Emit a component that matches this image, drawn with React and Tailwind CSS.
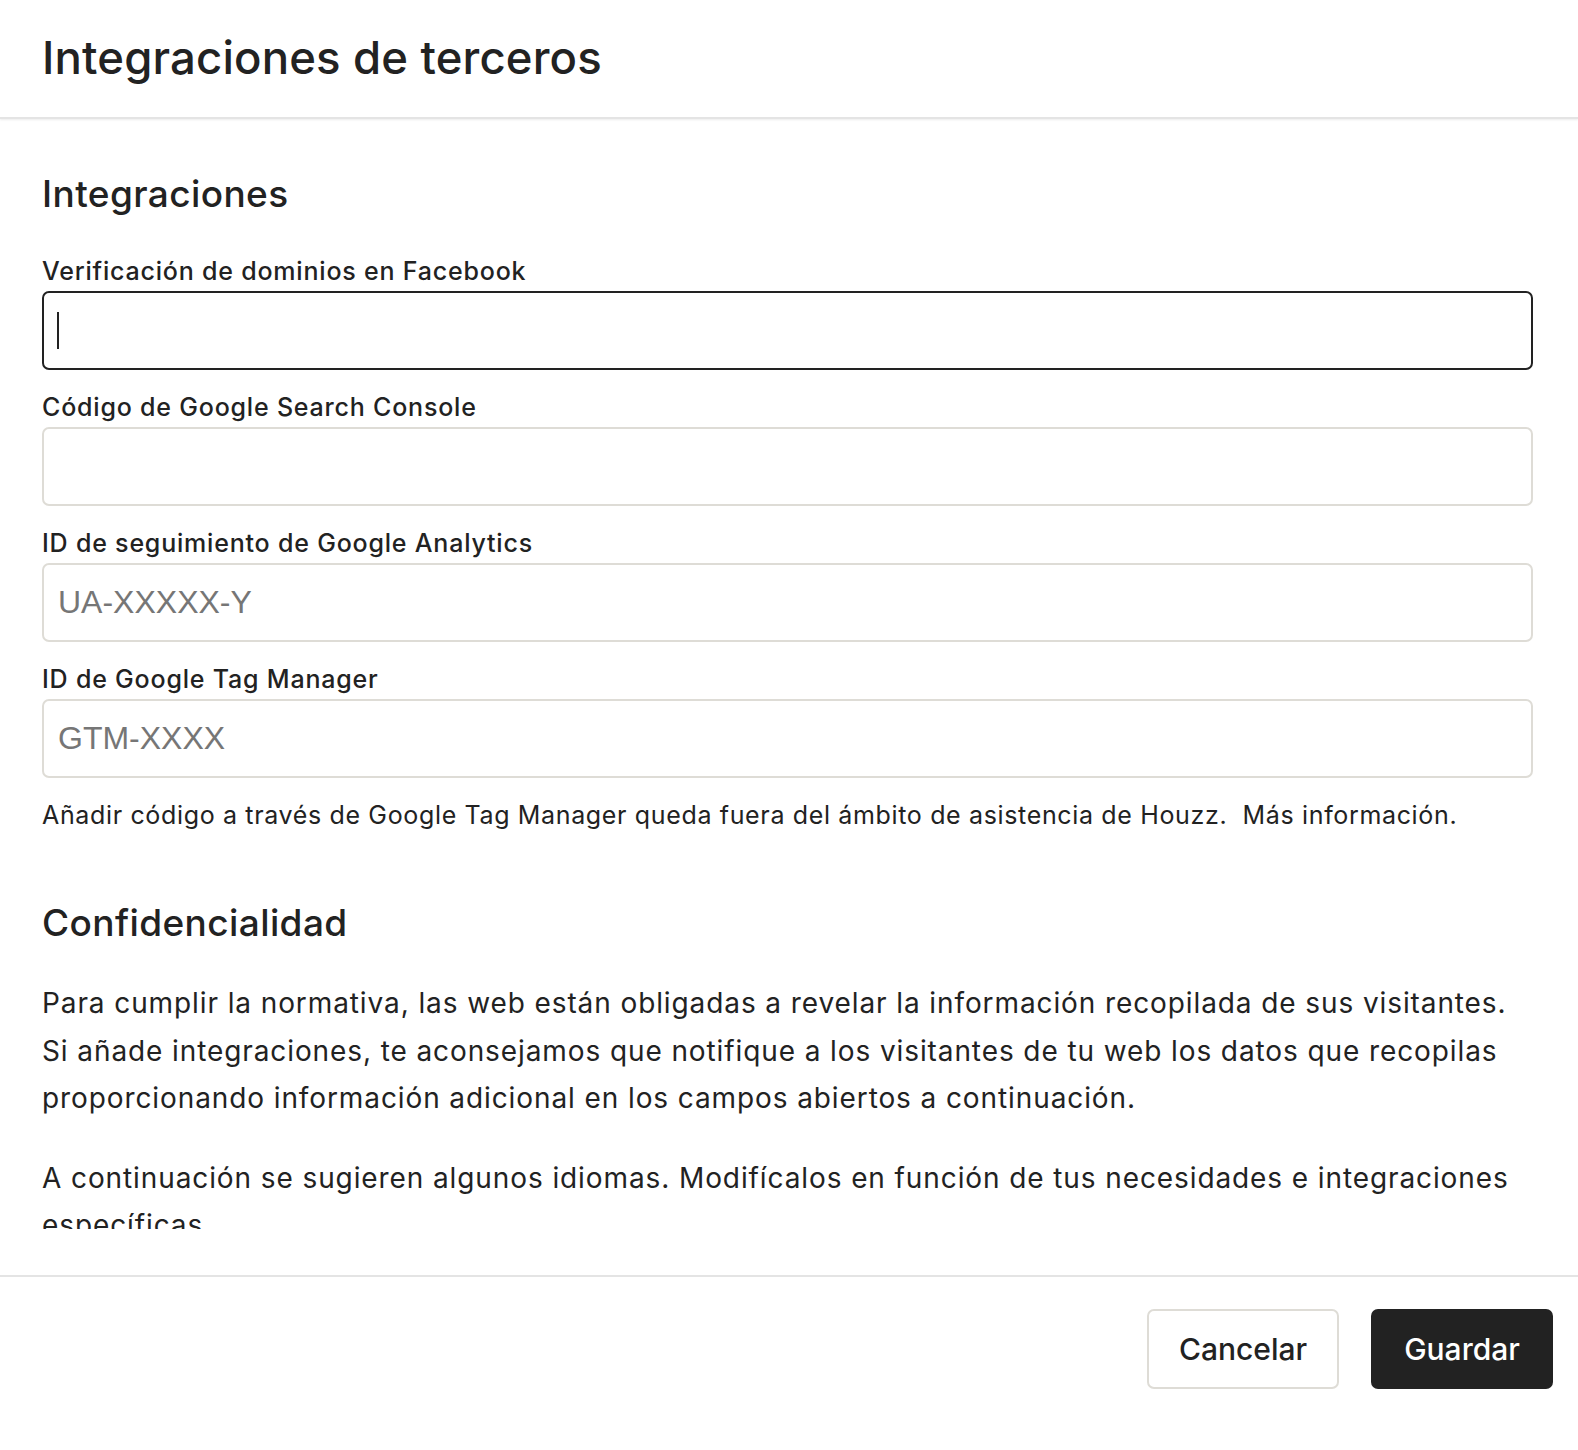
import React from 'react';

const fields = [
  { label: 'Verificación de dominios en Facebook', placeholder: '', focused: true },
  { label: 'Código de Google Search Console', placeholder: '' },
  { label: 'ID de seguimiento de Google Analytics', placeholder: 'UA-XXXXX-Y' },
  { label: 'ID de Google Tag Manager', placeholder: 'GTM-XXXX' },
];

const Field = ({ label, placeholder, focused }) => (
  <div className="mb-[21px]">
    <label className="block text-[25px] leading-[32px] font-medium text-[#222] mb-[4px] tracking-[0.8px]">{label}</label>
    <div className="relative">
      <input
        type="text"
        placeholder={placeholder}
        className={`w-full h-[79px] rounded-[7px] border-2 bg-white pl-[14px] text-[32px] text-[#222] outline-none placeholder:text-[#767676] ${
          focused ? 'border-[#222]' : 'border-[#dedcd6]'
        }`}
        style={{ fontFamily: '"Liberation Sans", Arial, sans-serif' }}
      />
      {focused && <span className="absolute left-[15px] top-[21px] h-[37px] w-[2px] bg-[#222]" />}
    </div>
  </div>
);

const App = () => {
  return (
    <div className="h-[1450px] flex flex-col bg-white text-[#222]" style={{ fontFamily: 'Inter, "Noto Sans", sans-serif' }}>
      <div className="h-[119px] shrink-0 flex items-center px-[42px] border-b-2 border-[#e4e4e4] shadow-[0_1px_2px_rgba(0,0,0,0.08)]">
        <h1 className="text-[45.5px] font-medium leading-none -mt-[2px] tracking-[0.15px]">Integraciones de terceros</h1>
      </div>

      <div className="h-[1110px] shrink-0 overflow-hidden pl-[42px] pr-[45px] pt-[53px]">
        <h2 className="text-[37px] leading-[44px] font-medium mb-[39px] tracking-[0.4px]">Integraciones</h2>
        {fields.map(f => (
          <Field key={f.label} {...f} />
        ))}
        <p className="text-[25px] leading-[32px] tracking-[0.65px] mt-[1px]">
          Añadir código a través de Google Tag Manager queda fuera del ámbito de asistencia de Houzz.&nbsp; Más información.
        </p>

        <h2 className="text-[37px] leading-[44px] font-medium mt-[70px] mb-[35px] tracking-[0.4px]">Confidencialidad</h2>
        <p className="text-[28px] leading-[47.5px] mb-[32px] tracking-[0.9px]">
          Para cumplir la normativa, las web están obligadas a revelar la información recopilada de sus visitantes. Si añade integraciones, te aconsejamos que notifique a los visitantes de tu web los datos que recopilas proporcionando información adicional en los campos abiertos a continuación.
        </p>
        <p className="text-[28px] leading-[47.5px] tracking-[0.9px]">
          A continuación se sugieren algunos idiomas. Modifícalos en función de tus necesidades e integraciones específicas.
        </p>
      </div>

      <div className="h-[46px] shrink-0" />

      <div className="flex-1 border-t-2 border-[#e4e4e4] flex justify-end items-start gap-[32px] pt-[32px] pr-[25px]">
        <button className="h-[80px] w-[192px] rounded-[7px] border-2 border-[#dedcd6] bg-white text-[30px] font-medium text-[#222]">
          Cancelar
        </button>
        <button className="h-[80px] w-[182px] rounded-[7px] bg-[#222] text-[30px] font-medium text-white">
          Guardar
        </button>
      </div>
    </div>
  );
};

export default App;
